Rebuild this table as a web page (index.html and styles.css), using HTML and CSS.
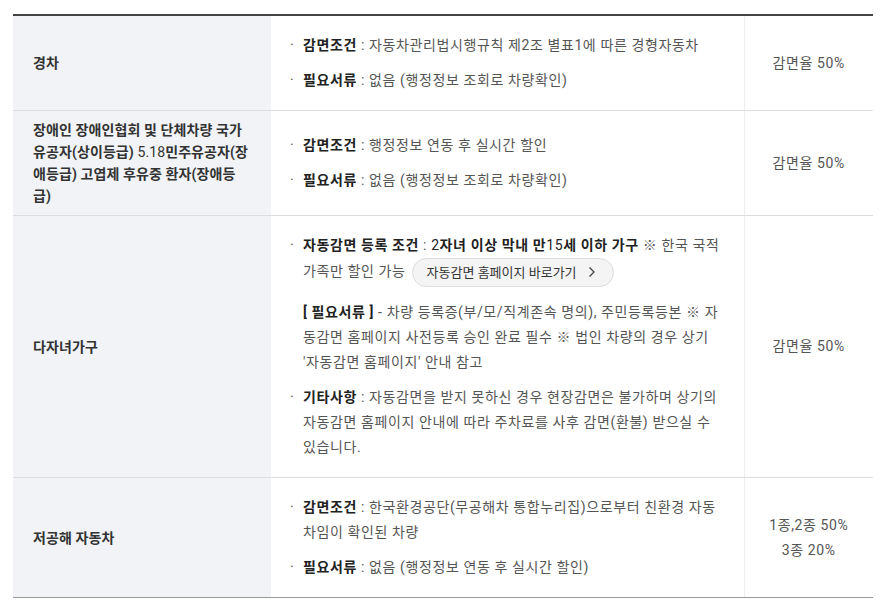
FILE: index.html
```html
<!DOCTYPE html>
<html lang="ko">
<head>
    <meta charset="UTF-8">
    <meta name="viewport" content="width=device-width, initial-scale=1.0">
    <title>감면 대상 안내</title>
    <link rel="stylesheet" href="styles.css">
</head>
<body>

<div class="wrap">
    <table class="discount-table">
        <colgroup>
            <col class="col-type">
            <col class="col-desc">
            <col class="col-rate">
        </colgroup>
        <tbody>
            <tr>
                <th>경차</th>
                <td class="desc">
                    <ul>
                        <li><b>감면조건</b> : 자동차관리법시행규칙 제2조 별표1에 따른 경형자동차</li>
                        <li><b>필요서류</b> : 없음 (행정정보 조회로 차량확인)</li>
                    </ul>
                </td>
                <td class="rate">감면율 50%</td>
            </tr>
            <tr>
                <th>장애인 장애인협회 및 단체차량 국가유공자(상이등급) <span class="num">5.18</span>민주유공자(장애등급) 고엽제 후유중 환자(장애등급)</th>
                <td class="desc">
                    <ul>
                        <li><b>감면조건</b> : 행정정보 연동 후 실시간 할인</li>
                        <li><b>필요서류</b> : 없음 (행정정보 조회로 차량확인)</li>
                    </ul>
                </td>
                <td class="rate">감면율 50%</td>
            </tr>
            <tr>
                <th>다자녀가구</th>
                <td class="desc">
                    <ul>
                        <li><b>자동감면 등록 조건</b> : <b><span class="num">2</span>자녀 이상 막내 만<span class="num">15</span>세 이하 가구</b> ※ 한국 국적 가족만 할인 가능 <a href="#" class="btn-link">자동감면 홈페이지 바로가기<svg width="8" height="12" viewBox="0 0 8 12"><path d="M1.5 1.5 L6 6 L1.5 10.5" fill="none" stroke="#444" stroke-width="1.3"/></svg></a></li>
                        <li class="plain"><b>[ 필요서류 ]</b> - 차량 등록증(부/모/직계존속 명의), 주민등록등본 ※ 자동감면 홈페이지 사전등록 승인 완료 필수 ※ 법인 차량의 경우 상기 '자동감면 홈페이지' 안내 참고</li>
                        <li><b>기타사항</b> : 자동감면을 받지 못하신 경우 현장감면은 불가하며 상기의 자동감면 홈페이지 안내에 따라 주차료를 사후 감면(환불) 받으실 수 있습니다.</li>
                    </ul>
                </td>
                <td class="rate">감면율 50%</td>
            </tr>
            <tr>
                <th>저공해 자동차</th>
                <td class="desc">
                    <ul>
                        <li><b>감면조건</b> : 한국환경공단(무공해차 통합누리집)으로부터 친환경 자동차임이 확인된 차량</li>
                        <li><b>필요서류</b> : 없음 (행정정보 연동 후 실시간 할인)</li>
                    </ul>
                </td>
                <td class="rate">1종,2종 50%<br>3종 20%</td>
            </tr>
        </tbody>
    </table>
</div>

</body>
</html>
```

FILE: styles.css
```css
body {
    margin: 0;
    background-color: #fff;
    font-family: Roboto, "Noto Sans CJK KR", sans-serif;
    font-size: 14px;
    color: #555;
    letter-spacing: 0.6px;
}
.wrap {
    padding: 14px 12px 0 13px;
}
.discount-table {
    width: 860px;
    border-collapse: collapse;
    table-layout: fixed;
    border-top: 2px solid #444;
}
.col-type {
    width: 258px;
}
.col-desc {
    width: 473px;
}
.col-rate {
    width: 129px;
}
.discount-table th,
.discount-table td {
    border-bottom: 1px solid #ddd;
    vertical-align: middle;
}
.discount-table tr:last-child th,
.discount-table tr:last-child td {
    border-bottom-color: #999;
}
.discount-table th {
    background-color: #f1f3f7;
    padding: 8px 20px;
    text-align: left;
    font-weight: bold;
    color: #333;
    line-height: 22px;
    letter-spacing: 0.1px;
}
.num {
    font-weight: normal;
}
.desc {
    padding: 17px 20px 17px 19px;
    border-right: 1px solid #eee;
}
.desc ul {
    margin: 0;
    padding: 0;
    list-style: none;
}
.desc li {
    line-height: 25px;
    padding-left: 13px;
    text-indent: -13px;
}
.desc li + li {
    margin-top: 10px;
}
.desc li.plain {
    margin-top: 13px;
    text-indent: 0;
}
.desc li::before {
    content: "·";
    display: inline-block;
    width: 13px;
    text-indent: 0;
}
.desc li.plain::before {
    content: none;
}
.desc b {
    color: #222;
}
.btn-link {
    display: inline-block;
    height: 29px;
    line-height: 27px;
    box-sizing: border-box;
    padding: 0 17px 0 14px;
    margin-left: 2px;
    border: 1px solid #ddd;
    border-radius: 15px;
    background-color: #f4f4f4;
    font-size: 13px;
    letter-spacing: 0;
    color: #333;
    text-decoration: none;
    text-indent: 0;
    vertical-align: middle;
}
.btn-link svg {
    margin-left: 11px;
    vertical-align: -1px;
}
.rate {
    text-align: center;
    line-height: 25px;
    color: #555;
}
```
